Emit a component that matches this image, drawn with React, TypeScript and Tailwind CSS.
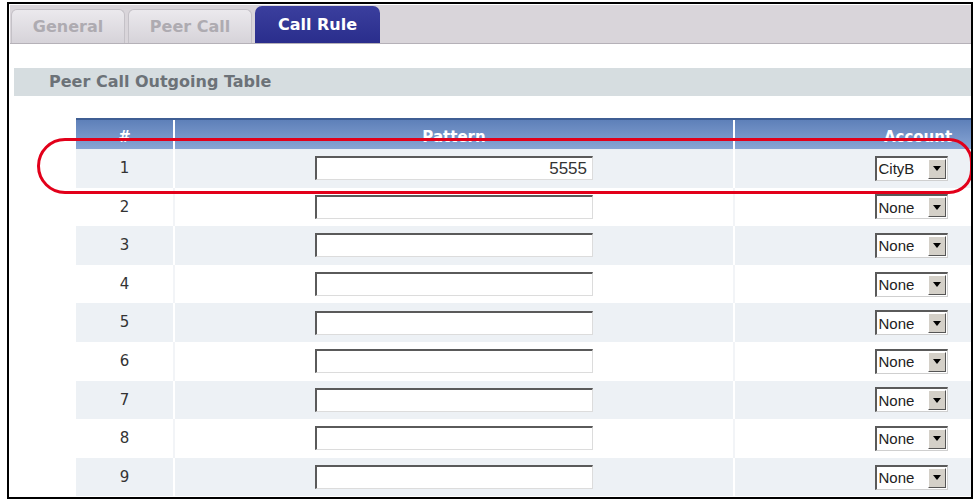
import React from "react";

const verdana = { fontFamily: '"DejaVu Sans", Verdana, sans-serif' };
const arial = { fontFamily: '"Liberation Sans", Arial, sans-serif' };

interface Rule {
  id: number;
  pattern: string;
  account: string;
}

const rules: Rule[] = [
  { id: 1, pattern: "5555", account: "CityB" },
  { id: 2, pattern: "", account: "None" },
  { id: 3, pattern: "", account: "None" },
  { id: 4, pattern: "", account: "None" },
  { id: 5, pattern: "", account: "None" },
  { id: 6, pattern: "", account: "None" },
  { id: 7, pattern: "", account: "None" },
  { id: 8, pattern: "", account: "None" },
  { id: 9, pattern: "", account: "None" },
];

const Tab: React.FC<{ label: string; active?: boolean; width: string }> = ({
  label,
  active,
  width,
}) => {
  if (active) {
    return (
      <div
        className={`${width} h-[37px] rounded-t-[7px] bg-gradient-to-b from-[#3b3f9e] to-[#2a2d8c] flex items-center justify-center text-white font-bold text-[16px]`}
        style={verdana}
      >
        {label}
      </div>
    );
  }
  return (
    <div
      className={`${width} h-[34px] rounded-t-[6px] border border-b-0 border-[#c4c1c7] bg-gradient-to-b from-[#ebe9ed] to-[#d6d3d9] flex items-center justify-center text-[#aeabb1] font-bold text-[16px]`}
      style={verdana}
    >
      {label}
    </div>
  );
};

const PatternInput: React.FC<{ value: string }> = ({ value }) => (
  <div
    className="w-[278px] h-[24px] bg-white border-t-2 border-l-2 border-t-[#5a5a5a] border-l-[#5a5a5a] border-r border-b border-r-[#dcdcdc] border-b-[#dcdcdc] flex items-center justify-end pr-[5px] text-[17px] text-[#333]"
    style={arial}
  >
    {value}
  </div>
);

const AccountSelect: React.FC<{ value: string }> = ({ value }) => (
  <div className="w-[73px] h-[25px] bg-white border-t-2 border-l-2 border-t-[#5a5a5a] border-l-[#5a5a5a] border-r border-b border-r-[#cfcfcf] border-b-[#cfcfcf] flex items-center">
    <span className="flex-1 pl-[2px] text-[15px] text-[#222] leading-none" style={arial}>
      {value}
    </span>
    <div className="w-[18px] h-[20px] mr-[1px] bg-[#d4d0c8] border-t border-l border-t-white border-l-white border-r border-b border-r-[#555] border-b-[#555] flex items-center justify-center">
      <svg width="8" height="5" viewBox="0 0 8 5">
        <path d="M0 0 H8 L4 5 Z" fill="#000" />
      </svg>
    </div>
  </div>
);

const App: React.FC = () => {
  return (
    <div className="w-[979px] h-[503px] bg-white pl-[7px] pt-[2px]">
      <div className="relative w-[966px] h-[497px] border-2 border-black overflow-hidden bg-white">
        {/* tab strip */}
        <div className="h-[39px] mt-[1px] ml-[1px] bg-[#d9d5da] border-b border-[#b5b1b8] flex items-end gap-[3px] pl-[1px]">
          <Tab label="General" width="w-[114px]" />
          <Tab label="Peer Call" width="w-[124px]" />
          <Tab label="Call Rule" width="w-[125px]" active />
        </div>

        {/* section title */}
        <div className="mt-[24px] ml-[5px] h-[28px] bg-[#d6dde0] flex items-center pl-[35px]">
          <span className="text-[16px] font-bold text-[#6c7278]" style={verdana}>
            Peer Call Outgoing Table
          </span>
        </div>

        {/* outgoing rules table */}
        <div className="mt-[22px] ml-[67px] w-[1020px]">
          <div
            className="flex h-[31px] text-white font-bold text-[15px] border-t-2 border-[#3f5e93]"
            style={verdana}
          >
            <div className="w-[97px] bg-gradient-to-b from-[#5e80b9] to-[#88a5d4] flex items-end justify-center pb-[1px]">
              #
            </div>
            <div className="w-[2px] bg-white" />
            <div className="w-[558px] bg-gradient-to-b from-[#5e80b9] to-[#88a5d4] flex items-end justify-center pb-[1px]">
              Pattern
            </div>
            <div className="w-[2px] bg-white" />
            <div className="w-[356px] bg-gradient-to-b from-[#5e80b9] to-[#88a5d4] flex items-end justify-center pb-[1px] pl-[10px]">
              Account
            </div>
          </div>

          {rules.map((rule) => {
            const shaded = rule.id % 2 === 1;
            return (
              <div
                key={rule.id}
                className={`flex h-[38.6px] ${shaded ? "bg-[#edf1f5]" : "bg-white"}`}
              >
                <div
                  className="w-[97px] flex items-center justify-center text-[15px] text-[#333]"
                  style={verdana}
                >
                  {rule.id}
                </div>
                <div className={`w-[2px] ${shaded ? "bg-white" : "bg-[#f2f4f7]"}`} />
                <div className="w-[558px] flex items-center justify-center">
                  <PatternInput value={rule.pattern} />
                </div>
                <div className={`w-[2px] ${shaded ? "bg-white" : "bg-[#f2f4f7]"}`} />
                <div className="w-[356px] flex items-center justify-center pr-[4px]">
                  <AccountSelect value={rule.account} />
                </div>
              </div>
            );
          })}
        </div>

        {/* highlight around the first rule */}
        <div className="absolute left-[28px] top-[134px] w-[936px] h-[56px] border-[3px] border-[#e2001a] rounded-l-[28px] rounded-r-[24px] pointer-events-none" />
      </div>
    </div>
  );
};

export default App;
